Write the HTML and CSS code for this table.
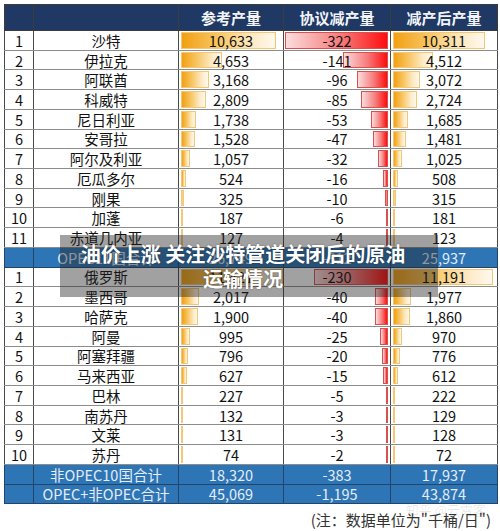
FILE: index.html
```html
<!DOCTYPE html>
<html lang="zh-CN">
  <head>
    <meta charset="UTF-8" />
    <meta name="viewport" content="width=device-width, initial-scale=1.0" />
    <title>OPEC+ 减产量</title>
    <link rel="stylesheet" href="styles.css">
  </head>
  <body>
    <div class="page">
      <table class="sheet">
        <colgroup>
          <col class="c-no" />
          <col class="c-name" />
          <col class="c-val" />
          <col class="c-cut" />
          <col class="c-after" />
        </colgroup>
        <thead>
          <tr>
            <th></th>
            <th></th>
            <th>参考产量</th>
            <th>协议减产量</th>
            <th>减产后产量</th>
          </tr>
        </thead>
        <tbody id="rows"></tbody>
      </table>

      <p class="note">(注：数据单位为"千桶/日")</p>
      <span class="mark">知乎 @云霄客</span>

      <div class="caption">
        <p>油价上涨 关注沙特管道关闭后的原油</p>
        <p>运输情况</p>
      </div>
    </div>

    <script>
      // 数据：编号, 国家, 参考产量, 减产量, 减产后产量 (sum 为合计行)
      const data = [
        [1, "沙特", 10633, -322, 10311],
        [2, "伊拉克", 4653, -141, 4512],
        [3, "阿联酋", 3168, -96, 3072],
        [4, "科威特", 2809, -85, 2724],
        [5, "尼日利亚", 1738, -53, 1685],
        [6, "安哥拉", 1528, -47, 1481],
        [7, "阿尔及利亚", 1057, -32, 1025],
        [8, "厄瓜多尔", 524, -16, 508],
        [9, "刚果", 325, -10, 315],
        [10, "加蓬", 187, -6, 181],
        [11, "赤道几内亚", 127, -4, 123],
        ["sum", "OPEC11国合计", 26749, -812, 25937],
        [1, "俄罗斯", 11421, -230, 11191],
        [2, "墨西哥", 2017, -40, 1977],
        [3, "哈萨克", 1900, -40, 1860],
        [4, "阿曼", 995, -25, 970],
        [5, "阿塞拜疆", 796, -20, 776],
        [6, "马来西亚", 627, -15, 612],
        [7, "巴林", 227, -5, 222],
        [8, "南苏丹", 132, -3, 129],
        [9, "文莱", 131, -3, 128],
        [10, "苏丹", 74, -2, 72],
        ["sum", "非OPEC10国合计", 18320, -383, 17937],
        ["sum", "OPEC+非OPEC合计", 45069, -1195, 43874]
      ];

      const fmt = (n) => n.toLocaleString("en-US");
      const tbody = document.getElementById("rows");

      data.forEach(function (row) {
        const tr = document.createElement("tr");
        const isSum = row[0] === "sum";
        if (isSum) tr.className = "sum";

        function cell(text, bar) {
          const td = document.createElement("td");
          if (bar) td.appendChild(bar);
          const span = document.createElement("span");
          span.className = "txt";
          span.textContent = text;
          td.appendChild(span);
          tr.appendChild(td);
        }

        function bar(kind, width) {
          if (isSum) return null;
          const b = document.createElement("i");
          b.className = "bar " + kind;
          b.style.width = Math.max(1, Math.round(width)) + "px";
          return b;
        }

        cell(isSum ? "" : row[0]);
        cell(row[1]);
        cell(fmt(row[2]), bar("pos", row[2] * 0.0089));
        cell(fmt(row[3]), bar("neg", -row[3] * 0.32));
        cell(fmt(row[4]), bar("pos", row[4] * 0.0089));
        tbody.appendChild(tr);
      });
    </script>
  </body>
</html>
```

FILE: styles.css
```css
* {
  margin: 0;
  padding: 0;
  box-sizing: border-box;
}

body {
  background-color: #fff;
  font-family: "Noto Sans CJK SC", "Noto Sans", sans-serif;
  color: #111;
}

.page {
  position: relative;
  width: 500px;
  height: 531px;
  padding: 4px 3px 0 4px;
  overflow: hidden;
}

/* 表格 */
.sheet {
  width: 493px;
  border-collapse: collapse;
  table-layout: fixed;
  border: 1px solid #3c3c3c;
}

.c-no { width: 29px; }
.c-name { width: 145px; }
.c-val { width: 105px; }
.c-cut { width: 107px; }
.c-after { width: 107px; }

.sheet th {
  height: 26px;
  background-color: #1f3864;
  color: #f2f4f8;
  font-size: 15px;
  font-weight: bold;
  border: 1px solid #3c3c3c;
}

.sheet tbody tr {
  height: 19.72px;
}

.sheet td {
  position: relative;
  padding: 0;
  font-size: 14.5px;
  line-height: 17px;
  text-align: center;
  border-left: 1px solid #4a4a4a;
  border-right: 1px solid #4a4a4a;
  border-bottom: 1px solid #8c8c8c;
}

.txt {
  position: relative;
}

.sheet tr.sum td {
  background-color: #2e75b6;
  color: #e4edf7;
  border-color: #23456b;
}

/* 数据条 */
.bar {
  position: absolute;
  top: 1px;
  bottom: 1px;
}

.bar.pos {
  left: 2px;
  background: linear-gradient(to right, #f2a012, #f8c766 40%, #fdeccb 78%, #fff8ec);
  border: 1px solid #f3c775;
}

.bar.neg {
  right: 2px;
  background: linear-gradient(to right, #fbdcdc, #f67a7a 55%, #ff0d0d);
  border: 1px solid #d85050;
}

/* 注释 */
.note {
  text-align: right;
  font-size: 15px;
  line-height: 20px;
  color: #333;
  padding: 6px 6px 0 0;
}

.mark {
  position: absolute;
  right: 14px;
  top: 500px;
  font-size: 13px;
  color: rgba(0, 0, 0, 0.1);
}

/* 标题浮层 */
.caption {
  position: absolute;
  left: 60px;
  top: 235px;
  width: 378px;
  height: 62px;
  padding: 6px 12px 0 0;
  background-color: rgba(30, 30, 30, 0.42);
  color: #fff;
  font-size: 20px;
  font-weight: bold;
  line-height: 25px;
  text-align: center;
  text-shadow: 0 0 2px rgba(0, 0, 0, 0.4);
}
```
